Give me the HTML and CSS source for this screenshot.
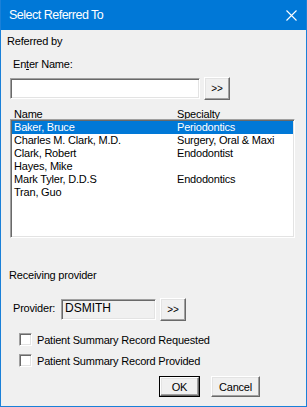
FILE: index.html
```html
<!DOCTYPE html>
<html>
<head>
<meta charset="utf-8">
<link rel="stylesheet" href="styles.css">
</head>
<body>
<div class="window">
  <div class="titlebar">
    <span class="title">Select Referred To</span>
    <svg class="close" width="11" height="11" viewBox="0 0 11 11"><path d="M0.5 0.5 L10.5 10.5 M10.5 0.5 L0.5 10.5" stroke="#fff" stroke-width="1.1" fill="none"/></svg>
  </div>
  <div class="content">
    <div class="lbl referred">Referred by</div>
    <div class="lbl enter">En<u>t</u>er Name:</div>
    <div class="input-row">
      <div class="textbox"></div>
      <div class="btn small">&gt;&gt;</div>
    </div>
    <div class="list-header">
      <span class="col-name">Name</span>
      <span class="col-spec">Specialty</span>
    </div>
    <div class="listbox">
      <div class="row selected"><span class="col-name">Baker, Bruce</span><span class="col-spec">Periodontics</span></div>
      <div class="row"><span class="col-name">Charles M. Clark, M.D.</span><span class="col-spec">Surgery, Oral &amp; Maxi</span></div>
      <div class="row"><span class="col-name">Clark, Robert</span><span class="col-spec">Endodontist</span></div>
      <div class="row"><span class="col-name">Hayes, Mike</span><span class="col-spec"></span></div>
      <div class="row"><span class="col-name">Mark Tyler, D.D.S</span><span class="col-spec">Endodontics</span></div>
      <div class="row"><span class="col-name">Tran, Guo</span><span class="col-spec"></span></div>
    </div>
    <div class="lbl receiving">Receiving provider</div>
    <div class="provider-row">
      <div class="prov-label">Provider:</div>
      <div class="prov-field">DSMITH</div>
      <div class="btn small prov-btn">&gt;&gt;</div>
    </div>
    <div class="check-row first">
      <div class="checkbox"></div>
      <span class="check-label">Patient Summary Record Requested</span>
    </div>
    <div class="check-row second">
      <div class="checkbox"></div>
      <span class="check-label">Patient Summary Record Provided</span>
    </div>
    <div class="button-row">
      <div class="default-frame"><div class="btn ok">OK</div></div>
      <div class="btn cancel">Cancel</div>
    </div>
  </div>
</div>
</body>
</html>
```
FILE: styles.css
```css
html, body {
  margin: 0;
  padding: 0;
  background: #f0f0f0;
}
.window {
  width: 307px;
  height: 407px;
  box-sizing: border-box;
  border: 1px solid #1a80d8;
  border-top: none;
  background: #f0f0f0;
  font-family: "Liberation Sans", Arial, sans-serif;
  font-size: 11px;
  letter-spacing: -0.2px;
  color: #000;
  overflow: hidden;
}
.titlebar {
  height: 30px;
  margin: 0 -1px;
  background: #0078d7;
  display: flex;
  align-items: center;
  justify-content: space-between;
  padding: 0 10px 0 9px;
}
.title {
  color: #fff;
  font-size: 12.5px;
  letter-spacing: -0.5px;
}
.close {
  display: block;
}
.content {
  display: flex;
  flex-direction: column;
  align-items: flex-start;
}
.lbl {
  height: 12px;
  line-height: 12px;
  white-space: nowrap;
}
.referred { margin: 5px 0 0 6px; }
.enter { margin: 11px 0 0 12px; }
.receiving { margin: 31px 0 0 8px; }

.input-row {
  margin: 7px 0 0 9px;
  height: 23px;
  display: flex;
  align-items: flex-start;
}
.textbox {
  margin-top: 1px;
  width: 190px;
  height: 21px;
  box-sizing: border-box;
  background: #fff;
  border-top: 1px solid #a0a0a0;
  border-left: 1px solid #a0a0a0;
  border-right: 1px solid #fff;
  border-bottom: 1px solid #fff;
  box-shadow: inset 1px 1px 0 #696969, inset -1px -1px 0 #e3e3e3;
}
.btn {
  box-sizing: border-box;
  background: #f0f0f0;
  border-top: 1px solid #fff;
  border-left: 1px solid #fff;
  border-right: 1px solid #696969;
  border-bottom: 1px solid #696969;
  box-shadow: inset -1px -1px 0 #a0a0a0, inset 1px 1px 0 #e3e3e3;
  display: flex;
  align-items: center;
  justify-content: center;
  white-space: nowrap;
}
.small {
  margin-left: 4px;
  width: 26px;
  height: 23px;
  font-size: 10px;
  letter-spacing: 0;
}
.list-header {
  margin: 8px 0 0 13px;
  height: 11px;
  line-height: 13px;
  display: flex;
  white-space: nowrap;
}
.list-header .col-name { width: 163px; }
.listbox {
  margin-left: 9px;
  width: 285px;
  height: 119px;
  box-sizing: border-box;
  background: #fff;
  border-top: 1px solid #a0a0a0;
  border-left: 1px solid #a0a0a0;
  border-right: 1px solid #fff;
  border-bottom: 1px solid #fff;
  box-shadow: inset 1px 1px 0 #696969, inset -1px -1px 0 #e3e3e3;
  padding: 1px;
}
.row {
  height: 13px;
  line-height: 13px;
  display: flex;
  padding-left: 2px;
  white-space: nowrap;
}
.row .col-name { width: 163px; }
.row.selected {
  background: #0078d7;
  color: #fff;
}
.provider-row {
  margin: 17px 0 0 12px;
  height: 24px;
  display: flex;
  align-items: flex-start;
}
.prov-label {
  width: 48px;
  height: 20px;
  line-height: 20px;
  white-space: nowrap;
}
.prov-field {
  margin-top: 1px;
  width: 95px;
  height: 21px;
  box-sizing: border-box;
  background: #f0f0f0;
  border-top: 1px solid #a0a0a0;
  border-left: 1px solid #a0a0a0;
  border-right: 1px solid #fff;
  border-bottom: 1px solid #fff;
  box-shadow: inset 1px 1px 0 #696969, inset -1px -1px 0 #e3e3e3;
  padding-left: 3px;
  line-height: 17px;
  font-size: 12px;
  letter-spacing: 0;
}
.prov-btn {
  margin-left: 4px;
}
.check-row {
  display: flex;
  align-items: center;
  height: 13px;
  margin-left: 18px;
}
.check-row.first { margin-top: 11px; }
.check-row.second { margin-top: 8px; }
.checkbox {
  width: 13px;
  height: 13px;
  box-sizing: border-box;
  background: #fff;
  border-top: 1px solid #a0a0a0;
  border-left: 1px solid #a0a0a0;
  border-right: 1px solid #fff;
  border-bottom: 1px solid #fff;
  box-shadow: inset 1px 1px 0 #696969, inset -1px -1px 0 #e3e3e3;
}
.check-label {
  margin-left: 5px;
  white-space: nowrap;
}
.button-row {
  margin: 9px 0 0 158px;
  display: flex;
  align-items: flex-start;
}
.default-frame {
  border: 1px solid #000;
  width: 41px;
  height: 21px;
  box-sizing: border-box;
}
.ok {
  width: 39px;
  height: 19px;
}
.cancel {
  margin-left: 11px;
  width: 49px;
  height: 21px;
}
```
